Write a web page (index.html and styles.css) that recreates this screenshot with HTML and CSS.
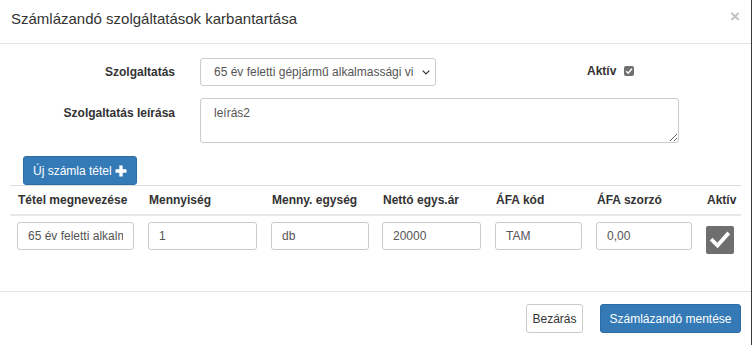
FILE: index.html
```html
<!DOCTYPE html>
<html lang="hu">
<head>
<meta charset="utf-8">
<title>Számlázandó szolgáltatások karbantartása</title>
<link rel="stylesheet" href="styles.css">
</head>
<body>
<div class="modal">
  <div class="modal-header">
    <h4 class="modal-title">Számlázandó szolgáltatások karbantartása</h4>
    <span class="close">×</span>
  </div>
  <div class="modal-body">
    <div class="form-row">
      <label class="form-label">Szolgaltatás</label>
      <div class="select-wrap">
        <select class="form-select">
          <option>65 év feletti gépjármű alkalmassági vi</option>
        </select>
        <svg class="chevron" width="8" height="5" viewBox="0 0 8 5"><path d="M0.7 0.7 L4 4 L7.3 0.7" fill="none" stroke="#333" stroke-width="1.2"/></svg>
      </div>
      <div class="active-group">
        <span class="active-label">Aktív</span>
        <span class="mini-check"><svg width="10" height="10" viewBox="0 0 10 10"><path d="M2.2 5.2 L4.2 7.2 L7.9 2.8" fill="none" stroke="#fff" stroke-width="1.5"/></svg></span>
      </div>
    </div>
    <div class="form-row row-area">
      <label class="form-label label-top">Szolgaltatás leírása</label>
      <textarea class="form-area">leírás2</textarea>
    </div>
    <button class="btn btn-primary btn-new">Új számla tétel <svg class="plus" width="12" height="12" viewBox="0 0 12 12"><path d="M4.3 0.5 H7.7 V4.3 H11.5 V7.7 H7.7 V11.5 H4.3 V7.7 H0.5 V4.3 H4.3 Z" fill="#fff"/></svg></button>
    <table class="items">
      <colgroup>
        <col class="c1"><col class="c2"><col class="c3"><col class="c4"><col class="c5"><col class="c6"><col class="c7">
      </colgroup>
      <thead>
        <tr>
          <th>Tétel megnevezése</th>
          <th>Mennyiség</th>
          <th>Menny. egység</th>
          <th>Nettó egys.ár</th>
          <th>ÁFA kód</th>
          <th>ÁFA szorzó</th>
          <th>Aktív</th>
        </tr>
      </thead>
      <tbody>
        <tr>
          <td><input class="cell-input" value="65 év feletti alkalmassági vizsgálat"></td>
          <td><input class="cell-input" value="1"></td>
          <td><input class="cell-input" value="db"></td>
          <td><input class="cell-input" value="20000"></td>
          <td><input class="cell-input" value="TAM"></td>
          <td><input class="cell-input" value="0,00"></td>
          <td><span class="big-check"><svg width="28" height="28" viewBox="0 0 28 28"><path d="M6.5 14.5 L11.5 19.5 L21.5 8.3" fill="none" stroke="#fff" stroke-width="3.8" stroke-linecap="square"/></svg></span></td>
        </tr>
      </tbody>
    </table>
  </div>
  <div class="modal-footer">
    <button class="btn btn-default">Bezárás</button>
    <button class="btn btn-primary">Számlázandó mentése</button>
  </div>
</div>
</body>
</html>
```
FILE: styles.css
```css
html, body {
  margin: 0;
  padding: 0;
  background: #fff;
}
body {
  font-family: "Liberation Sans", Arial, sans-serif;
  font-size: 12px;
  color: #333;
}
.modal {
  width: 751px;
  height: 345px;
  border-right: 1px solid #3a3a3a;
  background: #fff;
  display: flex;
  flex-direction: column;
}
.modal-header {
  height: 43px;
  border-bottom: 1px solid #e5e5e5;
  display: flex;
  align-items: center;
  justify-content: space-between;
  padding: 0 11px 0 11px;
  box-sizing: content-box;
}
.modal-title {
  margin: 0;
  font-size: 15px;
  font-weight: normal;
  color: #333;
  line-height: 20px;
  position: relative;
  top: -3px;
}
.close {
  font-size: 17px;
  font-weight: bold;
  color: #c2c2c2;
  line-height: 1;
  position: relative;
  top: -5px;
}
.modal-body {
  padding: 14px 0 0 0;
  border-bottom: 1px solid #e5e5e5;
  box-sizing: border-box;
  height: 248px;
}
.form-row {
  display: flex;
  align-items: center;
}
.form-label {
  width: 175px;
  text-align: right;
  font-weight: bold;
  margin-right: 25px;
  flex-shrink: 0;
}
.row-area {
  margin-top: 12px;
  align-items: flex-start;
}
.label-top {
  padding-top: 8px;
}
.select-wrap {
  position: relative;
  width: 236px;
  height: 28px;
}
.form-select {
  appearance: none;
  -webkit-appearance: none;
  width: 236px;
  height: 28px;
  border: 1px solid #ccc;
  border-radius: 3px;
  background: #fff;
  font-family: "Liberation Sans", Arial, sans-serif;
  font-size: 12px;
  color: #555;
  padding: 0 22px 0 13px;
  box-sizing: border-box;
  margin: 0;
}
.chevron {
  position: absolute;
  right: 6px;
  top: 12px;
  pointer-events: none;
}
.active-group {
  display: flex;
  align-items: center;
  margin-left: 151px;
  margin-top: -2px;
}
.active-label {
  font-weight: bold;
  margin-right: 8px;
}
.mini-check {
  width: 10px;
  height: 10px;
  border-radius: 2px;
  background: #707070;
  display: inline-flex;
}
.form-area {
  width: 479px;
  height: 45px;
  border: 1px solid #ccc;
  border-radius: 3px;
  box-sizing: border-box;
  padding: 7px 13px;
  font-family: "Liberation Sans", Arial, sans-serif;
  font-size: 12px;
  color: #555;
  margin: 0;
}
.btn {
  font-family: "Liberation Sans", Arial, sans-serif;
  font-size: 12px;
  height: 29px;
  border-radius: 3px;
  border: 1px solid transparent;
  padding: 0 10px;
  display: inline-flex;
  align-items: center;
  box-sizing: border-box;
  cursor: pointer;
}
.btn-primary {
  background: #337ab7;
  border-color: #2e6da4;
  color: #fff;
}
.btn-default {
  background: #fff;
  border-color: #ccc;
  color: #333;
}
.btn-new {
  margin: 13px 0 0 23px;
  width: 114px;
  padding: 0 0 0 9px;
  display: flex;
}
.plus {
  margin-left: 3px;
}
.items {
  margin-left: 10px;
  width: 731px;
  border-collapse: collapse;
  table-layout: fixed;
}
.c1 { width: 131px; }
.c2 { width: 123px; }
.c3 { width: 111px; }
.c4 { width: 113px; }
.c5 { width: 101px; }
.c6 { width: 110px; }
.c7 { width: 42px; }
.items th {
  text-align: left;
  font-weight: bold;
  height: 28px;
  padding: 0 0 0 8px;
  border-top: 1px solid #ddd;
  border-bottom: 2px solid #e8e8e8;
  white-space: nowrap;
}
.items td {
  padding: 6px 0 0 7px;
  vertical-align: top;
}
.cell-input {
  width: 100%;
  height: 28px;
  border: 1px solid #ccc;
  border-radius: 3px;
  box-sizing: border-box;
  padding: 0 10px;
  font-family: "Liberation Sans", Arial, sans-serif;
  font-size: 12px;
  color: #555;
  margin: 0;
}
.items td:nth-child(1) .cell-input { width: 117px; }
.items td:nth-child(2) .cell-input { width: 109px; }
.items td:nth-child(3) .cell-input { width: 98px; }
.items td:nth-child(4) .cell-input { width: 99px; }
.items td:nth-child(5) .cell-input { width: 87px; }
.items td:nth-child(6) .cell-input { width: 96px; }
.big-check {
  display: block;
  width: 28px;
  height: 28px;
  margin-top: 4px;
  background: #6e6e6e;
  border-radius: 2px;
}
.big-check svg {
  display: block;
}
.modal-footer {
  display: flex;
  justify-content: flex-end;
  gap: 17px;
  padding: 12px 10px 0 0;
}
.modal-footer .btn-default {
  width: 57px;
  justify-content: center;
  padding: 0;
}
.modal-footer .btn-primary {
  width: 141px;
  justify-content: center;
  padding: 0;
}
```
